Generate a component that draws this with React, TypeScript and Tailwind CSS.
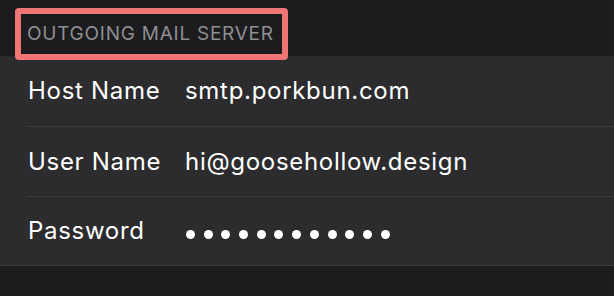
import React from "react";

const rows = [
  { label: "Host Name", value: "smtp.porkbun.com", h: "h-[70px]" },
  { label: "User Name", value: "hi@goosehollow.design", h: "h-[69px]" },
  { label: "Password", value: null, h: "h-[68px]" },
];

export default function App() {
  return (
    <div
      className="relative w-[614px] h-[296px] overflow-hidden bg-[#1c1c1e]"
      style={{ fontFamily: "Inter, 'Noto Sans', sans-serif" }}
    >
      <div className="h-[56px] pl-[27px] pt-[24px] text-[19px] leading-[19px] text-[#8e8e93] tracking-[0.75px]">
        OUTGOING MAIL SERVER
      </div>
      <div className="bg-[#2c2c2e] border-b border-[#3a3a3c]">
        {rows.map((r, i) => (
          <div key={r.label}>
            {i > 0 && <div className="ml-[26px] h-px bg-[#3d3d40]" />}
            <div className={`flex ${r.h} items-center pl-[28px] text-[24px] text-white tracking-[0.7px]`}>
              <div className="w-[157px]">{r.label}</div>
              {r.value ? (
                <div>{r.value}</div>
              ) : (
                <div className="flex gap-[8.7px] pl-[1px] pt-[6px]">
                  {Array.from({ length: 12 }).map((_, k) => (
                    <div key={k} className="w-[9px] h-[9px] rounded-full bg-white" />
                  ))}
                </div>
              )}
            </div>
          </div>
        ))}
      </div>
      <div className="absolute left-[15px] top-[8px] w-[273px] h-[52px] rounded-[4px] border-[6px] border-[#ef7675]" />
    </div>
  );
}
